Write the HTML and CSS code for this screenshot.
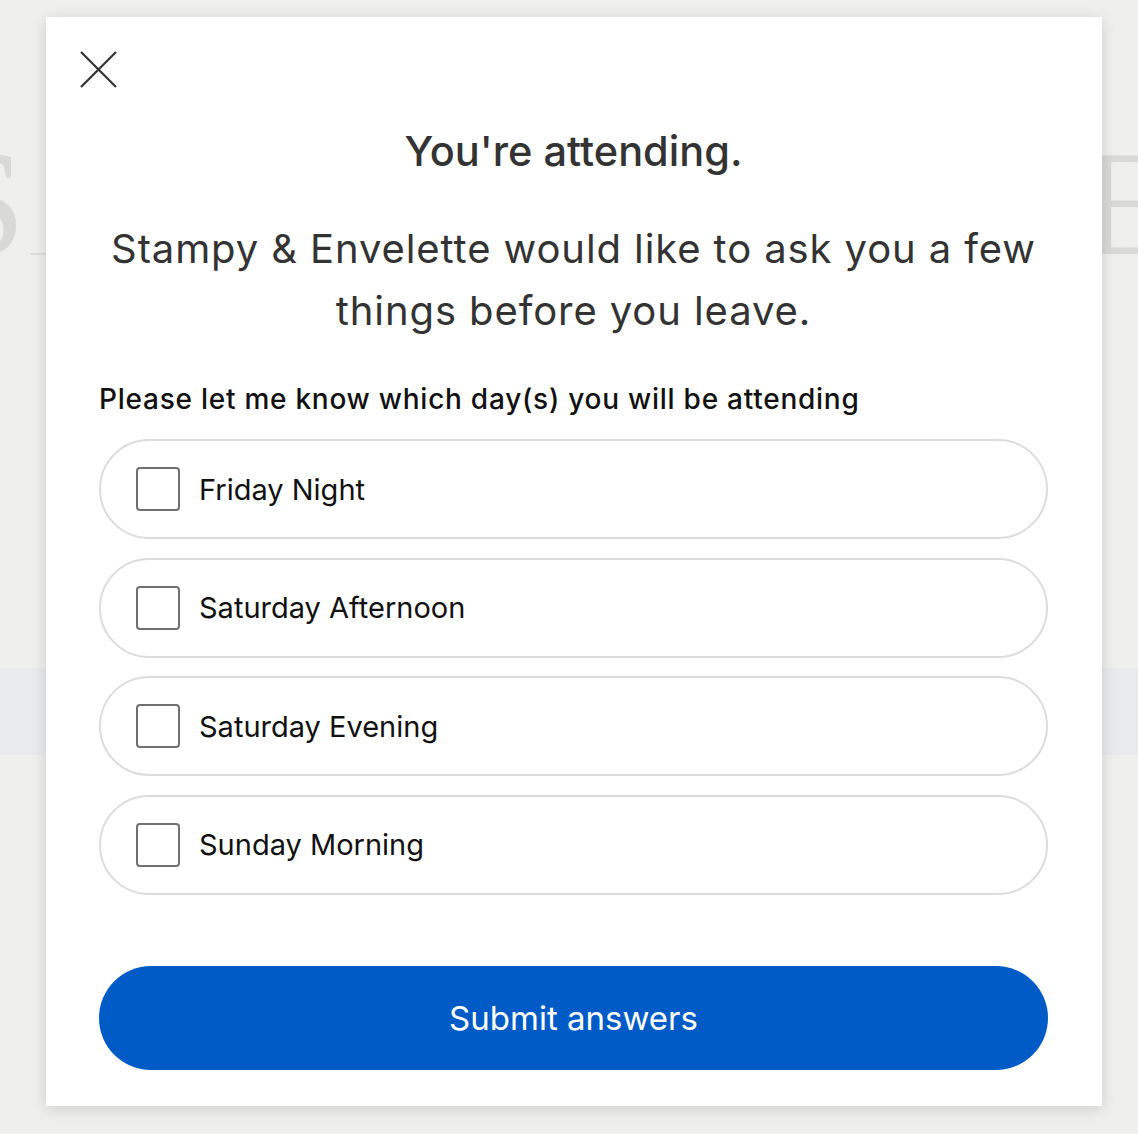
FILE: index.html
```html
<!DOCTYPE html>
<html lang="en">
<head>
<meta charset="utf-8">
<title>You're attending</title>
<link rel="stylesheet" href="styles.css">
</head>
<body>
<div class="page">
  <div class="bg-band"></div>
  <div class="bg-letter bg-left">S</div>
  <div class="bg-rule"></div>
  <div class="bg-letter bg-right">E</div>

  <div class="modal" role="dialog" aria-labelledby="title">
    <button class="close" aria-label="Close">
      <svg width="37" height="37" viewBox="0 0 37 37"><path d="M1 1 L36 36 M36 1 L1 36" stroke="#333" stroke-width="2.2" fill="none"/></svg>
    </button>
    <h1 id="title" class="title">You're attending.</h1>
    <p class="subtitle">Stampy &amp; Envelette would like to ask you a few things before you leave.</p>
    <form class="form">
      <div class="question">Please let me know which day(s) you will be attending</div>
      <div class="options">
        <label class="option"><span class="box"></span><span class="opt-text">Friday Night</span></label>
        <label class="option"><span class="box"></span><span class="opt-text">Saturday Afternoon</span></label>
        <label class="option"><span class="box"></span><span class="opt-text">Saturday Evening</span></label>
        <label class="option"><span class="box"></span><span class="opt-text">Sunday Morning</span></label>
      </div>
      <button type="button" class="submit">Submit answers</button>
    </form>
  </div>
</div>
</body>
</html>
```

FILE: styles.css
```css
* { box-sizing: border-box; }
html, body { margin: 0; padding: 0; }
body {
  background: #efefed;
  font-family: Inter, "Noto Sans", "Liberation Sans", sans-serif;
  width: 1138px;
  height: 1134px;
  overflow: hidden;
}
.page {
  position: relative;
  width: 1138px;
  height: 1134px;
}
.bg-band {
  position: absolute;
  left: 0; right: 0;
  top: 668px;
  height: 87px;
  background: #e9eaec;
}
.bg-letter {
  position: absolute;
  font-family: "Liberation Serif", serif;
  color: #d9d9d8;
  font-size: 150px;
  line-height: 1;
}
.bg-left { left: -58px; top: 128px; }
.bg-rule {
  position: absolute;
  left: 30px;
  top: 253px;
  width: 20px;
  height: 2px;
  background: #dcdcdb;
}
.bg-right { left: 1080px; top: 128px; }

.modal {
  position: absolute;
  left: 46px;
  top: 17px;
  width: 1056px;
  height: 1089px;
  background: #fff;
  box-shadow: 0 3px 14px rgba(0,0,0,0.14);
  padding: 0 54px 0 53px;
  text-align: center;
  color: #333;
}
.close {
  position: absolute;
  left: 34px;
  top: 34px;
  width: 37px;
  height: 37px;
  padding: 0;
  border: 0;
  background: none;
  cursor: pointer;
}
.close svg { display: block; }
.title {
  margin: 0;
  padding-top: 109px;
  font-size: 41.5px;
  font-weight: 500;
  line-height: 50px;
  color: #333;
}
.subtitle {
  margin: 42px 0 0;
  font-size: 40px;
  font-weight: 400;
  line-height: 62px;
  letter-spacing: 0.9px;
  color: #333;
}
.form { text-align: left; }
.question {
  margin-top: 37px;
  font-size: 28px;
  font-weight: 500;
  line-height: 40px;
  letter-spacing: 0.75px;
  color: #111;
}
.options {
  display: flex;
  flex-direction: column;
  gap: 18.5px;
  margin-top: 20px;
}
.option {
  display: flex;
  align-items: center;
  height: 100px;
  border: 2px solid #dcdcdc;
  border-radius: 50px;
  padding-left: 35px;
  cursor: pointer;
}
.box {
  width: 44px;
  height: 44px;
  border: 2px solid #707070;
  border-radius: 4px;
  flex: none;
}
.opt-text {
  margin-left: 19px;
  font-size: 29px;
  color: #111;
}
.submit {
  display: block;
  width: 100%;
  height: 104px;
  margin-top: 71px;
  border: 0;
  border-radius: 52px;
  background: #005bc7;
  color: #fff;
  font-family: inherit;
  font-size: 33px;
  cursor: pointer;
}
```
